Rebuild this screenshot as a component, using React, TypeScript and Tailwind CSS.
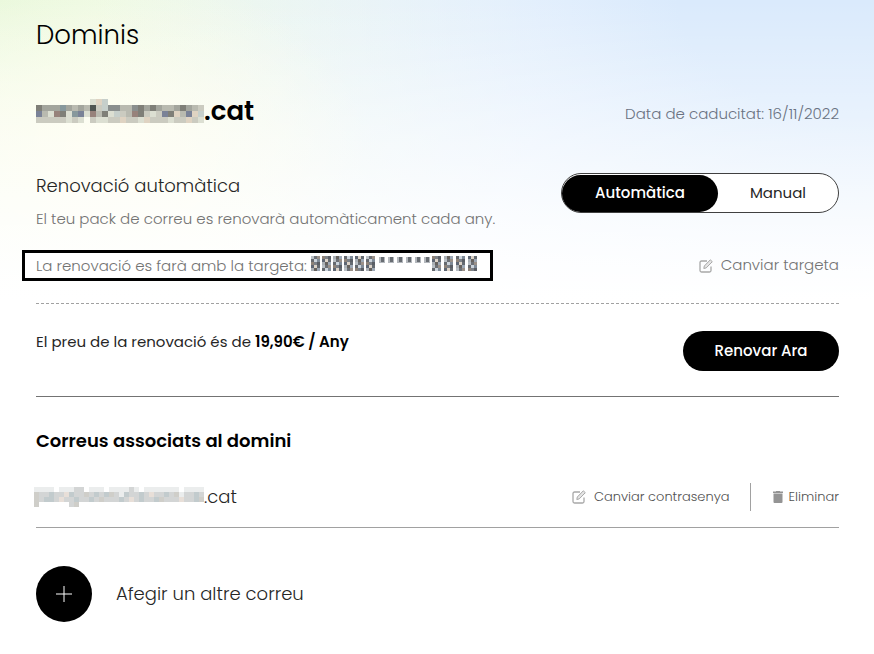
import type { ReactNode } from "react";

const palette: Record<string, string> = {
  a: "#4f5552",
  b: "#7f7f78",
  c: "#8a8f8e",
  d: "#a3a59d",
  e: "#b9bab0",
  f: "#cbcbc0",
  g: "#dcdfd2",
  h: "#7a8297",
  i: "#97827b",
  j: "#87989c",
  k: "#dfd3c2",
  l: "#c6cfcb",
  m: "#ebeded",
  n: "#d3d5d5",
  o: "#c2cbcd",
  p: "#e8dfd8",
  q: "#cfcec9",
};

const domainMosaic = [
  "         gkl                ",
  "bdddjdedeaflcceecbdbdeedbdef",
  "hegibgjhgiebglfeibfgfhbkehkl",
  "fffffgfg fggffkffgkfffgffkfg",
];

const mailMosaic = [
  "mmmm mmmnn mmm mmmmnm mmmmmmm mmmm",
  "qnnonnponnqnonoqnmonnonpnnonqmnnon",
  "qnoonpnnonnonqnnnonpnonnoqnnnpnnoq",
  "q      nq                         ",
];

function Mosaic(props: { rows: string[]; cell: number; label: string }) {
  const columns = Math.max(...props.rows.map((row) => row.length));
  return (
    <svg
      role="img"
      aria-label={props.label}
      width={columns * props.cell}
      height={props.rows.length * props.cell}
      viewBox={`0 0 ${columns} ${props.rows.length}`}
      shapeRendering="crispEdges"
      className="shrink-0"
    >
      {props.rows.flatMap((row, y) =>
        [...row].map((key, x) =>
          palette[key] ? (
            <rect key={`${x}-${y}`} x={x} y={y} width="1" height="1" fill={palette[key]} />
          ) : null,
        ),
      )}
    </svg>
  );
}

const smudge = [
  ["#b9bfc4", "#6c7076", "#9a9088"],
  ["#65696f", "#ccd4dc", "#7f8b98"],
  ["#8d8278", "#7c8188", "#5a5e65"],
  ["#5e6673", "#dcd3c8", "#646a71"],
  ["#aab0b6", "#66625e", "#9da8b5"],
];

// Hidden card number: smudged digits on both sides of six asterisks.
function MaskedCard() {
  const digits = [0, 11, 22, 33, 44, 55, 121, 133, 145, 157];
  const stars = [68, 77, 86, 95, 104, 113];
  return (
    <svg role="img" aria-label="Targeta" width="168" height="15" shapeRendering="crispEdges" className="mb-1 shrink-0">
      {digits.map((left, i) =>
        smudge.map((row, y) =>
          row.map((_, x) => (
            <rect
              key={`${left}-${x}-${y}`}
              x={left + x * 3}
              y={y * 3}
              width="3"
              height="3"
              fill={smudge[(y + i * 2) % 5][x]}
            />
          )),
        ),
      )}
      {stars.map((x) => (
        <g key={x}>
          <rect x={x} y="1" width="6" height="6" fill="#b4b8bd" />
          <rect x={x + 2} y="1" width="3" height="5" fill="#686d73" />
        </g>
      ))}
    </svg>
  );
}

function EditIcon() {
  return (
    <svg
      width="14"
      height="14"
      viewBox="0 0 14 14"
      fill="none"
      stroke="#a8a8a8"
      strokeWidth="1.3"
      aria-hidden="true"
    >
      <path d="M8 2H2.500A1.500 1.500 0 0 0 1 3.500v8A1.500 1.500 0 0 0 2.500 13h8a1.500 1.500 0 0 0 1.500-1.500V7.500" />
      <path d="M4.800 9.500l.5-2.500 6-6.200 2 1.900-6.100 6.200z" fill="#e5e5e5" strokeWidth="1" />
    </svg>
  );
}

function TrashIcon() {
  return (
    <svg width="10" height="12" viewBox="0 0 10 12" fill="#949494" aria-hidden="true">
      <path d="M0 .5h3V0h4v.5h3V2H0zM.5 2.500h9V11a1 1 0 0 1-1 1h-7a1 1 0 0 1-1-1z" />
    </svg>
  );
}

function Row(props: { className?: string; children: ReactNode }) {
  return (
    <div className={`flex items-center justify-between gap-4 ${props.className ?? ""}`}>
      {props.children}
    </div>
  );
}

export default function App() {
  return (
    <main className="min-h-screen bg-white bg-[linear-gradient(to_bottom,#ffffff00,#ffffff_300px),radial-gradient(ellipse_260px_180px_at_110px_150px,#fffdeb,#fffdeb00),radial-gradient(ellipse_780px_480px_at_100%_0,#daeafc_25%,#daeafc00),radial-gradient(ellipse_560px_440px_at_0_0,#e9f8dc,#e9f8dc00)] pt-[17px] pr-[35px] pb-8 pl-9 font-['Poppins','Inter',sans-serif] text-neutral-800">
      <h1 className="text-[26px] leading-9 font-light text-black">Dominis</h1>

      <Row className="mt-10">
        <h2 className="flex items-center text-[26px] leading-9 font-semibold text-black">
          <Mosaic rows={domainMosaic} cell={6} label="Domini" />
          .cat
        </h2>
        <p className="pt-1.5 text-[15px] leading-6 font-light text-gray-500">
          Data de caducitat: 16/11/2022
        </p>
      </Row>

      <Row className="mt-11">
        <div>
          <h3 className="text-lg leading-[26px] font-light">Renovació automàtica</h3>
          <p className="mt-2 text-[15px] leading-6 font-light text-neutral-500">
            El teu pack de correu es renovarà automàticament cada any.
          </p>
        </div>
        <div className="mb-[18px] flex h-10 shrink-0 rounded-full border border-neutral-700 bg-white pt-px text-[15px]">
          <button type="button" aria-pressed="true" className="w-[156px] rounded-full bg-black font-medium text-white">
            Automàtica
          </button>
          <button type="button" aria-pressed="false" className="w-[120px] rounded-full">
            Manual
          </button>
        </div>
      </Row>

      <Row className="mt-[19px] text-[15px] font-light text-neutral-500">
        <p className="-ml-3.5 flex h-[31px] items-center gap-1 border-3 border-black bg-white px-[11px] leading-6">
          La renovació es farà amb la targeta:
          <MaskedCard />
        </p>
        <button type="button" className="flex items-center gap-2">
          <EditIcon />
          Canviar targeta
        </button>
      </Row>

      <section className="mt-[22px] border-t border-b border-t-neutral-400 border-b-neutral-500 pt-[27px] pb-[25px] [border-top-style:dashed]">
        <div className="flex items-start justify-between gap-4">
          <p className="text-[15px] leading-[22px]">
            El preu de la renovació és de <strong className="font-semibold text-black">19,90€ / Any</strong>
          </p>
          <button type="button" className="h-10 w-[156px] rounded-full bg-black text-[15px] font-medium text-white">
            Renovar Ara
          </button>
        </div>
      </section>

      <h3 className="mt-8 text-lg leading-6 font-semibold text-black">Correus associats al domini</h3>

      <Row className="mt-[22px] border-b border-neutral-400 pt-2 pb-4">
        <p className="-ml-0.5 flex items-center text-lg leading-7 font-light">
          <Mosaic rows={mailMosaic} cell={5} label="Correu" />
          .cat
        </p>
        <div className="flex items-center text-[13px] text-neutral-600">
          <button type="button" className="flex items-center gap-2 pr-5 font-light">
            <EditIcon />
            Canviar contrasenya
          </button>
          <button type="button" className="flex h-7 items-center gap-1.5 border-l border-neutral-400 pl-[22px] font-light">
            <TrashIcon />
            Eliminar
          </button>
        </div>
      </Row>

      <button type="button" className="mt-[38px] flex items-center gap-6 text-lg font-light">
        <span className="flex size-14 items-center justify-center rounded-full bg-black">
          <svg width="16" height="16" viewBox="0 0 16 16" stroke="#ffffff" aria-hidden="true">
            <path d="M8 0v16M0 8h16" />
          </svg>
        </span>
        Afegir un altre correu
      </button>
    </main>
  );
}
